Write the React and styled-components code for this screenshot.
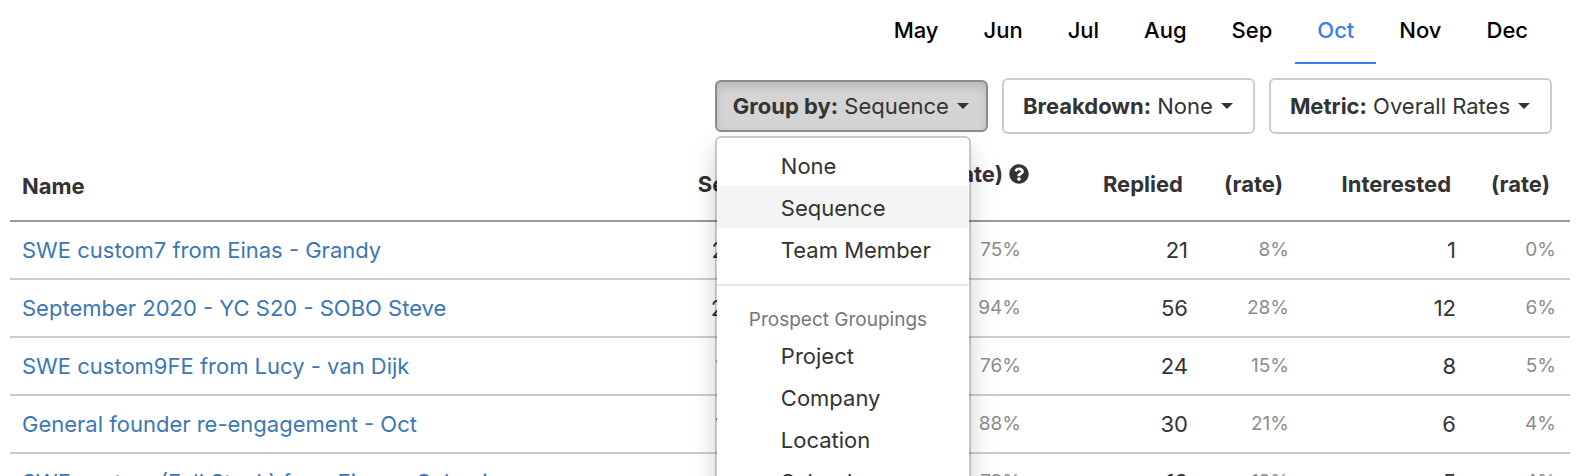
import React, { useState } from "react";
import styled, { createGlobalStyle, css } from "styled-components";
import { FaQuestionCircle } from "react-icons/fa";

const GlobalStyle = createGlobalStyle`
  * {
    box-sizing: border-box;
  }
  body {
    margin: 0;
    background: white;
    color: #333;
    font-family: Inter, "Liberation Sans", sans-serif;
    font-size: 22px;
    line-height: 30px;
  }
  button {
    font: inherit;
    color: inherit;
    cursor: pointer;
  }
`;

const Page = styled.div`
  height: 100vh;
  overflow: hidden;
  padding: 0 8px 0 10px;
`;

const Months = styled.nav`
  display: flex;
  justify-content: flex-end;
  gap: 1px;
  padding-right: 20px;
`;

const Month = styled.button`
  height: 64px;
  padding: 0 22px 2px;
  border: 0;
  border-bottom: 2px solid ${({ $active }) => ($active ? "#387ef0" : "transparent")};
  background: none;
  color: ${({ $active }) => ($active ? "#387ef0" : "#000")};
  font-weight: 500;
`;

const Filters = styled.div`
  display: flex;
  justify-content: flex-end;
  align-items: center;
  gap: 14px;
  margin-top: 14px;
  padding-right: 18px;
`;

const FilterWrapper = styled.div`
  position: relative;
`;

const FilterButton = styled.button`
  display: flex;
  align-items: center;
  gap: 8px;
  height: 56px;
  padding: 0 20px 0 19px;
  border: 2px solid #ccc;
  border-radius: 6px;
  background: white;
  white-space: nowrap;
  ${({ $open }) =>
    $open &&
    css`
      height: 52px;
      padding: 0 17px 0 16px;
      background: #d4d4d4;
      border-color: #8c8c8c;
      box-shadow: inset 0 5px 8px rgba(0, 0, 0, 0.13);
    `}
`;

const Caret = styled.span`
  border-top: 6px solid #333;
  border-left: 6px solid transparent;
  border-right: 6px solid transparent;
`;

const Menu = styled.ul`
  position: absolute;
  top: 100%;
  left: 0;
  z-index: 1;
  width: 256px;
  margin: 4px 0 0;
  padding: 6px 0;
  list-style: none;
  background: white;
  background-clip: padding-box;
  border: 2px solid rgba(0, 0, 0, 0.2);
  border-radius: 6px;
  box-shadow: 0 12px 24px rgba(0, 0, 0, 0.18);
`;

const MenuItem = styled.button`
  display: block;
  width: 100%;
  height: 42px;
  padding: 2px 0 0 64px;
  border: 0;
  background: ${({ $selected }) => ($selected ? "#f4f4f4" : "none")};
  text-align: left;
`;

const MenuDivider = styled.li`
  height: 2px;
  margin: 14px 0;
  background: #e5e5e5;
`;

const MenuHeader = styled.li`
  height: 34px;
  padding: 5px 0 0 32px;
  color: #777;
  font-size: 19px;
`;

const Table = styled.table`
  width: 100%;
  margin-top: 14px;
  table-layout: fixed;
  border-collapse: separate;
  border-spacing: 0;
`;

const Col = styled.col`
  width: ${({ $width }) => $width}px;
`;

const Th = styled.th`
  height: 74px;
  padding: 21px 20px 0 0;
  border-bottom: 2px solid #999;
  font-weight: 700;
  text-align: right;
  vertical-align: top;
  white-space: nowrap;
`;

const NameTh = styled(Th)`
  padding: 23px 0 0 12px;
  text-align: left;
`;

const HintTh = styled(Th)`
  padding: 11px 6px 0 0;
  svg {
    width: 20px;
    height: 20px;
    margin-left: 6px;
    vertical-align: -2px;
  }
`;

const Td = styled.td`
  height: 58px;
  padding: 0 15px 0 0;
  border-bottom: 2px solid #ccc;
  text-align: right;
`;

const NameTd = styled(Td)`
  padding: 0 0 0 12px;
  text-align: left;
  white-space: nowrap;
  a {
    color: #3c77b5;
    text-decoration: none;
  }
`;

const RateTd = styled(Td)`
  padding-right: 14px;
  color: #8c8c8c;
  font-size: 19px;
`;

const months = ["May", "Jun", "Jul", "Aug", "Sep", "Oct", "Nov", "Dec"];

const groupings = ["None", "Sequence", "Team Member"];
const prospectGroupings = ["Project", "Company", "Location", "School"];

const rows = [
  ["SWE custom7 from Einas - Grandy", 262, 197, "75%", 21, "8%", 1, "0%"],
  ["September 2020 - YC S20 - SOBO Steve", 200, 188, "94%", 56, "28%", 12, "6%"],
  ["SWE custom9FE from Lucy - van Dijk", 160, 122, "76%", 24, "15%", 8, "5%"],
  ["General founder re-engagement - Oct", 143, 126, "88%", 30, "21%", 6, "4%"],
  ["SWE custom (Full Stack) from Einas - Oshani", 138, 101, "73%", 18, "13%", 5, "4%"],
];

const Filter = ({ label, value, open, onToggle, children }) => (
  <FilterWrapper>
    <FilterButton $open={open} aria-expanded={!!open} onClick={onToggle}>
      <span>
        <b>{label}:</b> {value}
      </span>
      <Caret />
    </FilterButton>
    {open && children}
  </FilterWrapper>
);

const App = () => {
  const [month, setMonth] = useState("Oct");
  const [groupBy, setGroupBy] = useState("Sequence");
  const [menuOpen, setMenuOpen] = useState(true);

  const selectGroup = (group) => () => {
    setGroupBy(group);
    setMenuOpen(false);
  };

  const renderItem = (group) => (
    <li key={group}>
      <MenuItem $selected={group === groupBy} onClick={selectGroup(group)}>
        {group}
      </MenuItem>
    </li>
  );

  return (
    <Page>
      <GlobalStyle />
      <Months>
        {months.map((name) => (
          <Month key={name} $active={name === month} onClick={() => setMonth(name)}>
            {name}
          </Month>
        ))}
      </Months>

      <Filters>
        <Filter
          label="Group by"
          value={groupBy}
          open={menuOpen}
          onToggle={() => setMenuOpen(!menuOpen)}
        >
          <Menu>
            {groupings.map(renderItem)}
            <MenuDivider />
            <MenuHeader>Prospect Groupings</MenuHeader>
            {prospectGroupings.map(renderItem)}
          </Menu>
        </Filter>
        <Filter label="Breakdown" value="None" />
        <Filter label="Metric" value="Overall Rates" />
      </Filters>

      <Table>
        <colgroup>
          <col />
          <Col $width={110} />
          <Col $width={168} />
          <Col $width={100} />
          <Col $width={168} />
          <Col $width={100} />
          <Col $width={168} />
          <Col $width={99} />
        </colgroup>
        <thead>
          <tr>
            <NameTh>Name</NameTh>
            <Th>Sent</Th>
            <Th>Opened</Th>
            <HintTh>
              (rate)
              <FaQuestionCircle />
            </HintTh>
            <Th>Replied</Th>
            <Th>(rate)</Th>
            <Th>Interested</Th>
            <Th>(rate)</Th>
          </tr>
        </thead>
        <tbody>
          {rows.map(([name, sent, opened, openRate, replied, replyRate, interested, rate]) => (
            <tr key={name}>
              <NameTd>
                <a href="#sequence">{name}</a>
              </NameTd>
              <Td>{sent}</Td>
              <Td>{opened}</Td>
              <RateTd>{openRate}</RateTd>
              <Td>{replied}</Td>
              <RateTd>{replyRate}</RateTd>
              <Td>{interested}</Td>
              <RateTd>{rate}</RateTd>
            </tr>
          ))}
        </tbody>
      </Table>
    </Page>
  );
};

export default App;
